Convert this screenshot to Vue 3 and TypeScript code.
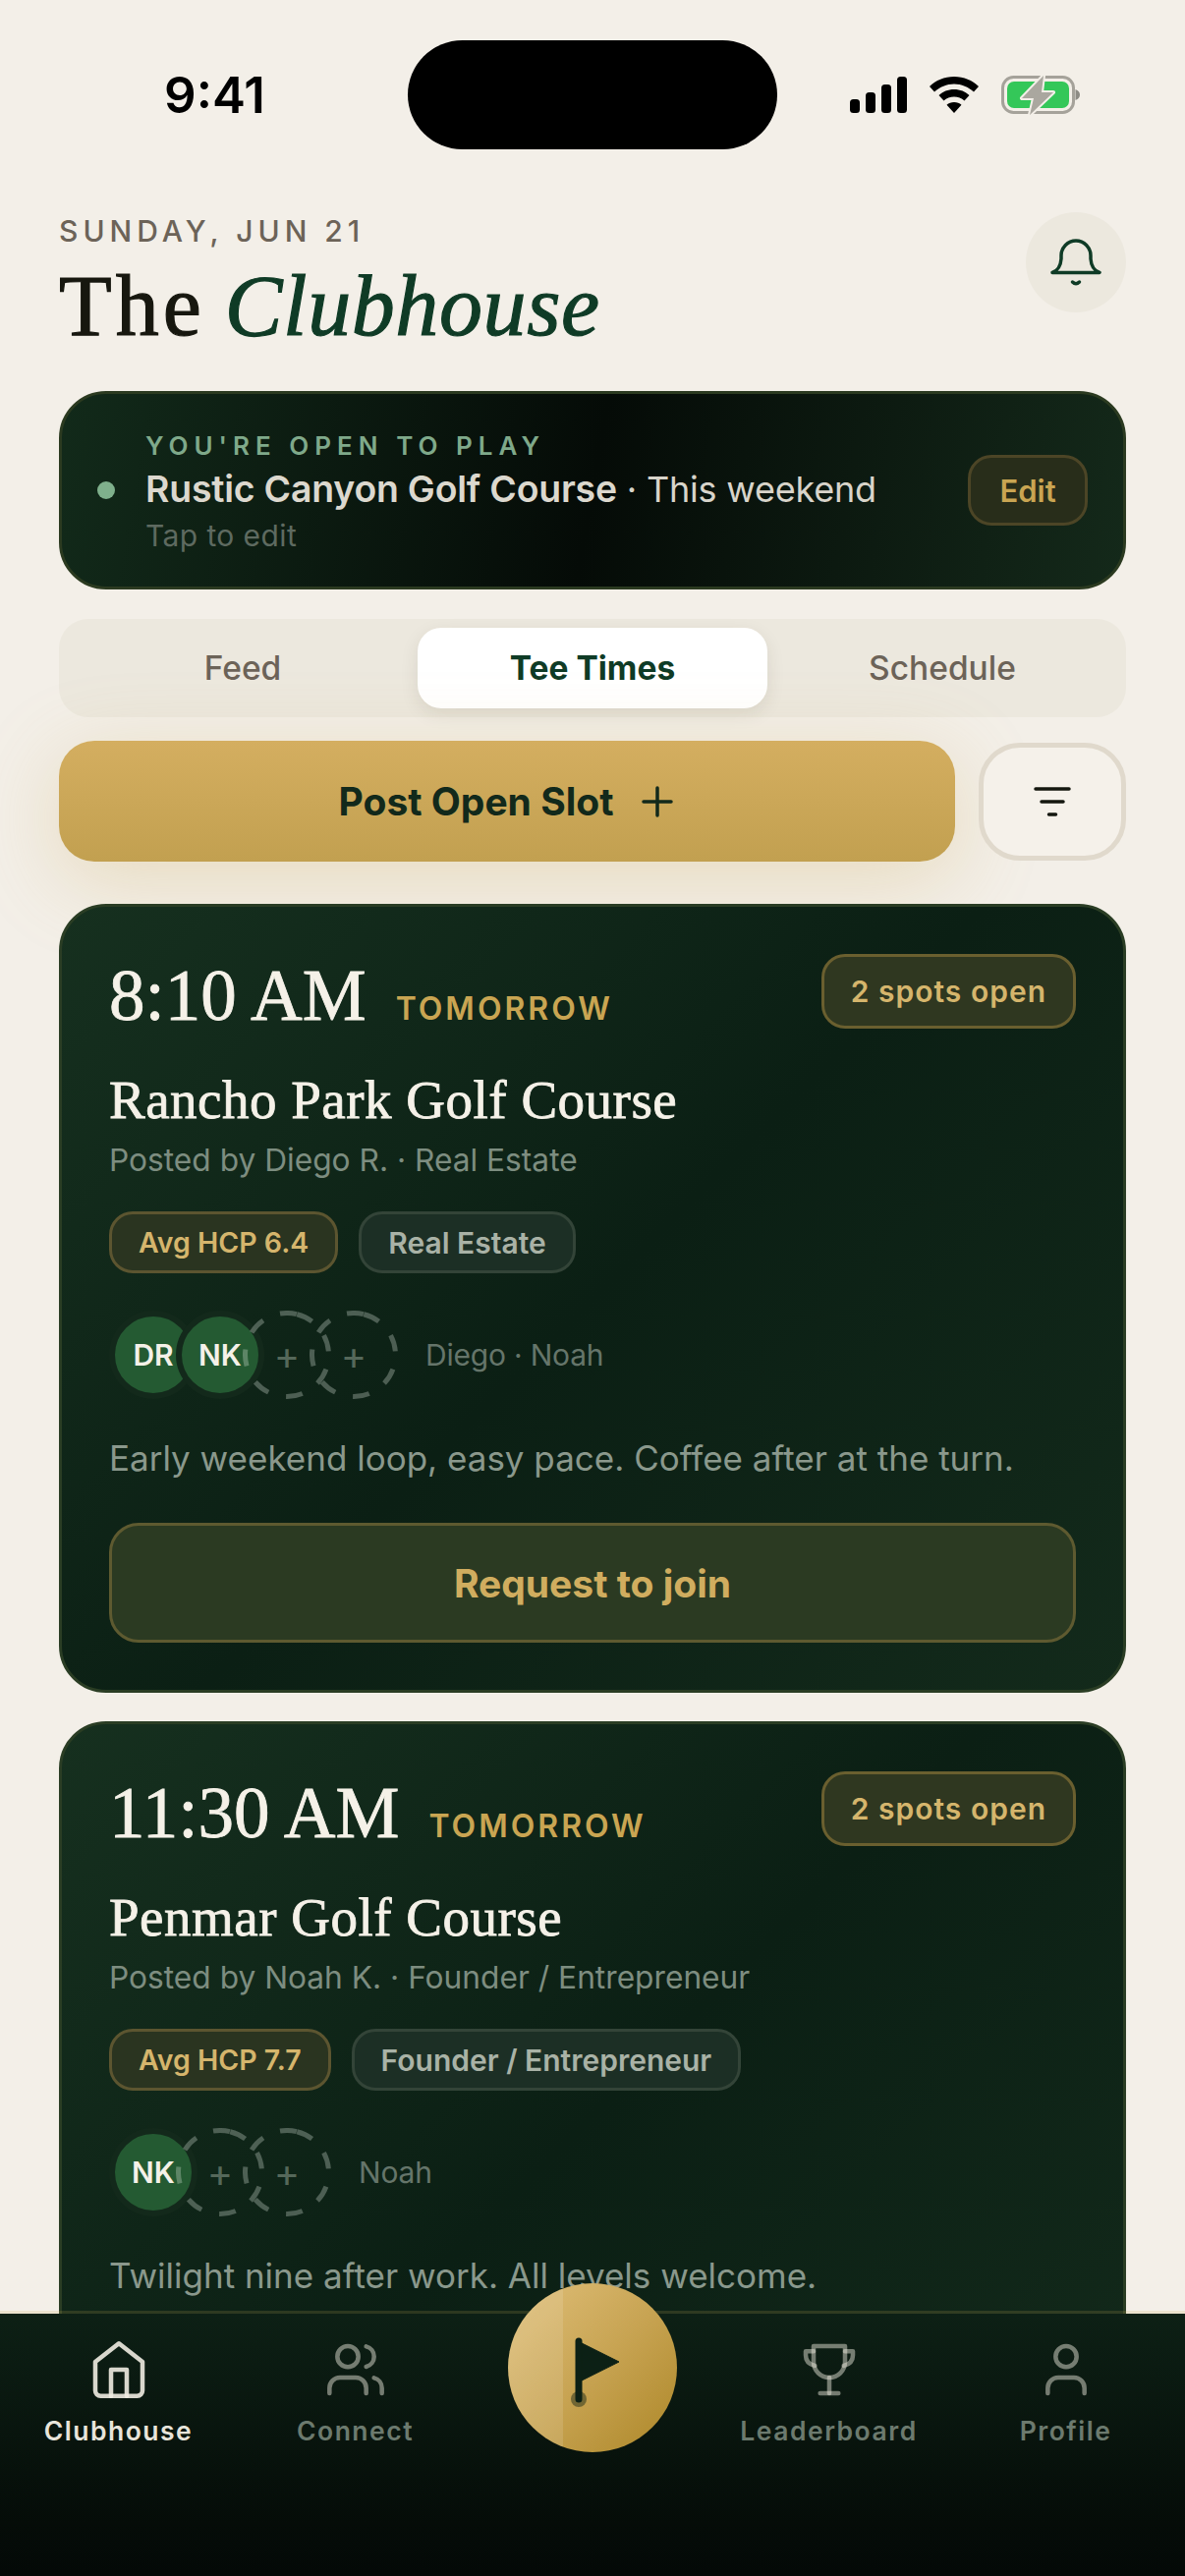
<template>
  <div class="phone">
    <div class="status">
      <span class="clock">9:41</span>
      <div class="island" />
      <div class="status-icons">
        <svg width="58" height="38" viewBox="0 0 58 38"><rect x="0" y="23" width="10" height="14" rx="3.5" /><rect x="16" y="16" width="10" height="21" rx="3.5" /><rect x="32" y="8" width="10" height="29" rx="3.5" /><rect x="48" y="0" width="10" height="37" rx="3.5" /></svg>
        <svg width="52" height="38" viewBox="0 0 52 38"><path d="M26 0C16 0 7.500 3.700 1 10l5 5.500C11.500 10.500 18.400 7.500 26 7.500s14.500 3 20 8l5-5.500C44.500 3.700 36 0 26 0z" /><path d="M26 13c-6.200 0-11.500 2.300-15.500 6l5 5.500c2.800-2.500 6.500-4 10.500-4s7.700 1.500 10.500 4l5-5.500C37.500 15.300 32.200 13 26 13z" /><path d="M26 26c-3 0-5.500 1-7.500 2.800L26 37l7.500-8.200C31.500 27 29 26 26 26z" /></svg>
        <svg width="83" height="42" viewBox="0 0 83 42">
          <rect x="1.500" y="2.500" width="72" height="36" rx="11" fill="none" stroke="#a5a29a" stroke-width="3" />
          <rect x="6" y="7" width="63" height="27" rx="7" fill="#34c759" />
          <path d="M75.500 15c3 1 4.500 3 4.500 5.500s-1.500 4.500-4.500 5.500z" fill="#8d8b84" />
          <path d="M43 1 21 24h12l-4 17 24-23H41z" fill="#aaa79f" stroke="#f3efe8" stroke-width="4" stroke-linejoin="round" paint-order="stroke" />
        </svg>
      </div>
    </div>

    <header class="head">
      <div>
        <div class="date">SUNDAY, JUN 21</div>
        <h1 class="title">The <em>Clubhouse</em></h1>
      </div>
      <button type="button" class="bell">
        <svg width="60" height="60" viewBox="0 0 60 60" fill="none" stroke="#0f3b26" stroke-width="3.500" stroke-linecap="round" stroke-linejoin="round"><path d="M6 40.500c5.500-2 8.500-7 9-14V23a15 15 0 0 1 30 0v3.500c.5 7 3.500 12 9 14z" /><path d="M26.500 50q3.500 3.500 7 0" /></svg>
      </button>
    </header>

    <section class="open">
      <span class="open-dot" />
      <div class="open-text">
        <div class="open-label">YOU'RE OPEN TO PLAY</div>
        <div class="open-line"><b>Rustic Canyon Golf Course</b> · This weekend</div>
        <div class="open-hint">Tap to edit</div>
      </div>
      <button type="button" class="open-edit">Edit</button>
    </section>

    <nav class="tabs">
      <button v-for="t in tabs" :key="t" type="button" class="tab" :class="{ on: t === 'Tee Times' }">{{ t }}</button>
    </nav>

    <div class="actions">
      <button type="button" class="post">
        Post Open Slot
        <svg width="36" height="36" viewBox="0 0 36 36" fill="none" stroke="#12291b" stroke-width="3.500" stroke-linecap="round"><path d="M18 4v28M4 18h28" /></svg>
      </button>
      <button type="button" class="filter">
        <svg width="40" height="32" viewBox="0 0 40 32" fill="none" stroke="#14170f" stroke-width="3.500" stroke-linecap="round"><path d="M3 3h34M9 16h22M16.500 29h7" /></svg>
      </button>
    </div>

    <div class="cards">
      <article v-for="c in cards" :key="c.time" class="card">
        <div class="card-top">
          <div class="when"><span class="time">{{ c.time }}</span><span class="day">TOMORROW</span></div>
          <span class="spots">2 spots open</span>
        </div>
        <h2 class="course">{{ c.course }}</h2>
        <div class="posted">Posted by {{ c.by }} · {{ c.job }}</div>
        <div class="chips">
          <span class="chip gold">Avg HCP {{ c.hcp }}</span>
          <span class="chip">{{ c.job }}</span>
        </div>
        <div class="players">
          <div class="stack">
            <span v-for="p in c.players" :key="p" class="av">{{ p }}</span>
            <span v-for="n in 2" :key="n" class="av empty">
              <svg class="ring" width="90" height="90" viewBox="0 0 90 90"><circle cx="45" cy="45" r="42.500" fill="none" stroke="rgba(225, 235, 225, .3)" stroke-width="5" stroke-dasharray="17 18.600" transform="rotate(-76 45 45)" /></svg>
              +
            </span>
          </div>
          <span class="names">{{ c.names }}</span>
        </div>
        <p class="note">{{ c.note }}</p>
        <button type="button" class="join">Request to join</button>
      </article>
    </div>

    <footer class="nav">
      <div class="nav-item on">
        <svg class="nav-ico" viewBox="0 0 24 24"><path d="m3 9 9-7 9 7v11a2 2 0 0 1-2 2H5a2 2 0 0 1-2-2z" /><path d="M9 22V12h6v10" /></svg>
        Clubhouse
      </div>
      <div class="nav-item">
        <svg class="nav-ico" viewBox="0 0 24 24"><path d="M16 21v-2a4 4 0 0 0-4-4H6a4 4 0 0 0-4 4v2" /><circle cx="9" cy="7" r="4" /><path d="M22 21v-2a4 4 0 0 0-3-3.870" /><path d="M16 3.130a4 4 0 0 1 0 7.750" /></svg>
        Connect
      </div>
      <div class="nav-gap" />
      <div class="nav-item">
        <svg class="nav-ico" viewBox="0 0 24 24"><path d="M6 3h12v6a6 6 0 0 1-12 0z" /><path d="M6 5H3v1.500c0 2 1.300 3.500 3.500 4" /><path d="M18 5h3v1.500c0 2-1.300 3.500-3.500 4" /><path d="M12 15v6" /><path d="M8.500 21h7" /></svg>
        Leaderboard
      </div>
      <div class="nav-item">
        <svg class="nav-ico" viewBox="0 0 24 24"><circle cx="12" cy="7" r="4" /><path d="M19 21v-2a4 4 0 0 0-4-4H9a4 4 0 0 0-4 4v2" /></svg>
        Profile
      </div>
      <button type="button" class="play">
        <svg width="90" height="90" viewBox="0 0 90 90"><circle cx="31" cy="77" r="8" fill="#0c2015" opacity=".45" /><path d="M31 18v59" stroke="#0c2015" stroke-width="7" stroke-linecap="round" /><path d="M34 20l38 19-38 19z" fill="#0c2015" stroke="#0c2015" stroke-width="1" stroke-linejoin="round" /></svg>
      </button>
    </footer>
  </div>
</template>

<script setup lang="ts">
const tabs = ['Feed', 'Tee Times', 'Schedule']

const cards = [
  {
    time: '8:10 AM',
    course: 'Rancho Park Golf Course',
    by: 'Diego R.',
    job: 'Real Estate',
    hcp: '6.4',
    players: ['DR', 'NK'],
    names: 'Diego · Noah',
    note: 'Early weekend loop, easy pace. Coffee after at the turn.',
  },
  {
    time: '11:30 AM',
    course: 'Penmar Golf Course',
    by: 'Noah K.',
    job: 'Founder / Entrepreneur',
    hcp: '7.7',
    players: ['NK'],
    names: 'Noah',
    note: 'Twilight nine after work. All levels welcome.',
  },
]
</script>

<style>
html, body { margin: 0; background: #f3efe8; }
</style>

<style scoped>
.phone { position: relative; width: 1206px; height: 2622px; overflow: hidden; background: #f3efe8; font-family: Inter, "Liberation Sans", sans-serif; color: #14170f; }
button { font-family: inherit; cursor: pointer; }

.status { display: grid; grid-template-columns: 1fr 376px 1fr; align-items: center; padding-top: 41px; }
.clock { text-align: center; padding-left: 22px; font-size: 51px; font-weight: 600; color: #000; }
.island { height: 111px; background: #000; border-radius: 56px; }
.status-icons { display: flex; align-items: center; justify-content: flex-end; gap: 22px; padding-right: 104px; }

.head { display: flex; justify-content: space-between; padding: 65px 60px 0; }
.date { font-size: 30px; font-weight: 500; letter-spacing: 5px; color: #6c6358; line-height: 36px; margin-bottom: 9px; }
.title { margin: 0; font-family: "Liberation Serif", serif; font-size: 88px; font-weight: 400; line-height: 100px; letter-spacing: 4px; word-spacing: -6px; color: #17170f; -webkit-text-stroke: 1.200px currentColor; }
.title em { color: #0f3b26; letter-spacing: .6px; }
.bell { width: 102px; height: 102px; margin-top: -1px; border: 0; border-radius: 50%; background: #ece8de; display: flex; align-items: center; justify-content: center; padding: 0; }

.open { display: flex; align-items: center; height: 202px; box-sizing: border-box; margin: 36px 60px 0; padding: 0 36px; border: 3px solid #2b3a20; border-radius: 48px; background: linear-gradient(100deg, #122a1a 0%, #050b07 50%, #14291a 100%); }
.open-dot { width: 18px; height: 18px; border-radius: 50%; background: #7fb08c; flex: none; margin-right: 31px; }
.open-text { flex: 1; padding-top: 5px; }
.open-label { font-size: 26px; font-weight: 600; letter-spacing: 6px; color: #7fa98a; line-height: 30px; margin-bottom: 3px; }
.open-line { font-size: 36px; color: #d8d4ca; line-height: 52px; letter-spacing: -0.200px; margin-bottom: 2px; }
.open-line b { font-size: 37.400px; font-weight: 600; color: #dcd8ce; }
.open-hint { font-size: 30px; letter-spacing: .4px; color: #5e6a60; line-height: 38px; }
.open-edit { width: 122px; height: 72px; border: 3px solid #4c4526; border-radius: 24px; background: #282d1a; color: #c9a552; font-size: 31px; font-weight: 600; padding: 0; }

.tabs { display: flex; margin: 30px 60px 0; padding: 9px; height: 100px; box-sizing: border-box; background: #ece8de; border-radius: 30px; }
.tab { flex: 1; border: 0; background: none; border-radius: 24px; font-size: 33.500px; font-weight: 500; color: #6c6358; padding: 0; }
.tab.on { background: #fff; color: #0f3b26; font-weight: 700; box-shadow: 0 6px 18px rgba(60, 50, 30, .1); }

.actions { display: flex; align-items: center; gap: 24px; margin: 24px 60px 0; }
.post { flex: 1; height: 123px; display: flex; align-items: center; justify-content: center; gap: 27px; border: 0; border-radius: 36px; background: linear-gradient(180deg, #d4ae60, #c2a050); color: #12291b; font-size: 39px; font-weight: 700; box-shadow: 0 18px 84px rgba(200, 165, 80, .28); }
.filter { width: 150px; height: 120px; box-sizing: border-box; border: 5px solid #e0d9cc; border-radius: 42px; background: #f5f1ea; display: flex; align-items: center; justify-content: center; padding: 0; }

.cards { display: flex; flex-direction: column; gap: 29px; margin: 43px 60px 0; }
.card { flex: none; height: 803px; box-sizing: border-box; padding: 48px 48px 0; border: 3px solid #2a3d24; border-radius: 48px; background: linear-gradient(135deg, #16301f 0%, #0b1f14 50%, #132a1b 100%); }
.card-top { display: flex; justify-content: space-between; align-items: flex-start; height: 76px; }
.when { display: flex; align-items: baseline; gap: 30px; }
.time { font-family: "Liberation Serif", serif; font-size: 73px; line-height: 85px; color: #f5f1e8; -webkit-text-stroke: .8px currentColor; }
.day { font-size: 32px; font-weight: 600; letter-spacing: 3px; color: #c9a552; }
.spots { height: 76px; box-sizing: border-box; padding: 0 27px; display: flex; align-items: center; border: 3px solid #6a5f2f; border-radius: 24px; background: #2f3720; color: #d5b56c; font-size: 30px; font-weight: 600; letter-spacing: 1px; }
.course { margin: 42px 0 0; font-family: "Liberation Serif", serif; font-size: 55px; font-weight: 400; line-height: 62px; letter-spacing: .5px; color: #f5f1e8; -webkit-text-stroke: .8px currentColor; }
.posted { font-size: 31.700px; color: #7d8d80; line-height: 44px; margin-top: 8px; }
.chips { display: flex; gap: 21px; margin-top: 30px; }
.chip { height: 63px; box-sizing: border-box; padding: 0 27px; display: flex; align-items: center; border: 3px solid #334438; border-radius: 24px; background: #1c2f25; color: #a9b2a6; font-size: 30px; font-weight: 600; }
.chip.gold { border-color: #5c5530; background: #2a3420; color: #d5b56c; font-size: 28.500px; }
.players { display: flex; align-items: center; gap: 28px; margin-top: 38px; height: 90px; }
.stack { display: flex; }
.av { position: relative; width: 90px; height: 90px; box-sizing: border-box; border-radius: 50%; display: flex; align-items: center; justify-content: center; background: #245a32; border: 6px solid #13291b; color: #f5f1e8; font-size: 30px; font-weight: 600; }
.av + .av { margin-left: -22px; }
.av.empty { background: none; border: 0; color: #55685a; font-size: 40px; font-weight: 400; }
.ring { position: absolute; left: 0; top: 0; }
.names { font-size: 30px; letter-spacing: -0.200px; color: #65756a; }
.note { margin: 32px 0 0; font-size: 35px; line-height: 56px; color: #8a988c; }
.join { width: 100%; height: 122px; margin-top: 38px; border: 3px solid #5e5a30; border-radius: 30px; background: #2b3a22; color: #d0ad5f; font-size: 39px; font-weight: 700; }

.nav { position: absolute; left: 0; right: 0; bottom: 0; height: 270px; box-sizing: border-box; display: flex; padding-top: 25px; border-top: 3px solid rgba(201, 165, 82, .18); background: linear-gradient(180deg, #0d2015 0%, #050c08 80%, #040907 100%) padding-box; }
.nav-item { width: 241px; display: flex; flex-direction: column; align-items: center; font-size: 26.500px; font-weight: 600; letter-spacing: 1.500px; color: #6c7a6e; line-height: 36px; }
.nav-item.on { color: #e8e4da; }
.nav-gap { width: 241px; }
.nav-ico { width: 64px; height: 64px; margin-bottom: 12px; fill: none; stroke: rgba(235, 232, 220, .48); stroke-width: 1.700; stroke-linecap: round; stroke-linejoin: round; }
.nav-item.on .nav-ico { stroke: rgba(240, 236, 226, .9); }
.play { position: absolute; left: 517px; top: -31px; width: 172px; height: 172px; padding: 0; border: 0; border-radius: 50%; overflow: hidden; background: linear-gradient(135deg, #e0c07a 0%, #c8a453 50%, #ad8728 100%); display: flex; align-items: center; justify-content: center; }
.play::before { content: ""; position: absolute; left: 0; top: 0; bottom: 0; width: 56px; background: rgba(255, 255, 255, .12); }
.play svg { position: relative; }
</style>
